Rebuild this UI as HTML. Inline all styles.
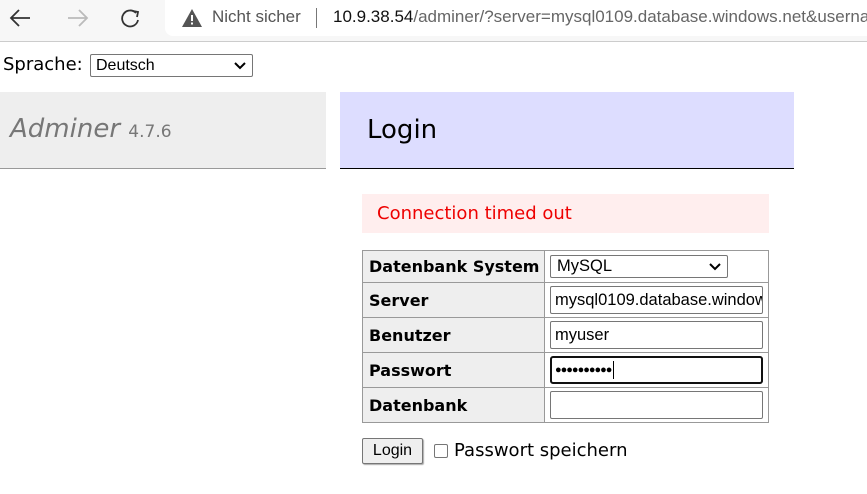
<!DOCTYPE html>
<html><head><style>
*{margin:0;padding:0;box-sizing:border-box}
body{width:867px;height:494px;overflow:hidden;background:#fff;font-family:"DejaVu Sans",sans-serif;position:relative}
.a{position:absolute}
.lbl{position:absolute;left:369px;font-weight:bold;font-size:16px;color:#000}
.inp{position:absolute;left:550px;width:213px;height:28px;border:1px solid #767676;border-radius:2px;background:#fff;font-family:"Liberation Sans",sans-serif;font-size:16.5px;padding-left:4px;line-height:26px;overflow:hidden;white-space:nowrap}
</style></head><body>
<div class="a" style="left:0;top:0;width:867px;height:42px;background:#f7f7f7;border-bottom:1px solid #ccc"></div>
<svg class="a" style="left:6px;top:6px" width="140" height="26" viewBox="0 0 140 26">
<path d="M24 12H6M13 4L5 12L13 20" stroke="#333" stroke-width="1.8" fill="none"/>
<path d="M62 12H80M73 4L81 12L73 20" stroke="#bbb" stroke-width="1.8" fill="none"/>
<path d="M130 7A8 8 0 1 0 132 14" stroke="#333" stroke-width="1.8" fill="none"/><path d="M127 5L132 6L131 11" stroke="#333" stroke-width="1.8" fill="none"/>
</svg>
<div class="a" style="left:165px;top:0;width:710px;height:36px;background:#fff;border-radius:0 0 0 8px"></div>
<svg class="a" style="left:181px;top:8px" width="22" height="20"><path d="M11 1L21 19H1Z" fill="#555"/><rect x="10" y="7" width="2" height="6" fill="#fff"/><rect x="10" y="14.5" width="2" height="2" fill="#fff"/></svg>
<div class="a" style="left:212px;top:7px;font-family:'Liberation Sans',sans-serif;font-size:17px;color:#555;white-space:nowrap">Nicht sicher</div>
<div class="a" style="left:316px;top:8px;width:1px;height:20px;background:#777"></div>
<div class="a" style="left:333px;top:7px;font-family:'Liberation Sans',sans-serif;font-size:17px;color:#111;white-space:nowrap">10.9.38.54<span style="color:#666">/adminer/?server=mysql0109.database.windows.net&amp;username</span></div>

<div class="a" style="left:3px;top:54px;font-size:18px">Sprache:</div>
<div class="a" style="left:90px;top:54px;width:163px;height:23px;border:1px solid #767676;border-radius:2px;font-family:'Liberation Sans',sans-serif;font-size:16px;padding-left:5px;line-height:21px">Deutsch<svg class="a" style="right:6px;top:7px" width="12" height="8"><path d="M1 1L6 6L11 1" stroke="#000" stroke-width="2" fill="none"/></svg></div>

<div class="a" style="left:0;top:92px;width:326px;height:77px;background:#eee;border-bottom:1px solid #999"></div>
<div class="a" style="left:10px;top:114px;font-size:26px;font-style:italic;color:#777;white-space:nowrap">Adminer <span style="font-style:normal;font-size:17px">4.7.6</span></div>
<div class="a" style="left:340px;top:92px;width:454px;height:77px;background:#ddf;border-bottom:1px solid #000"></div>
<div class="a" style="left:367px;top:115px;font-size:26px">Login</div>

<div class="a" style="left:362px;top:194px;width:407px;height:39px;background:#fee;color:#e00;font-size:18px;padding:9px 0 0 15px">Connection timed out</div>

<div class="a" style="left:362px;top:250px;width:407px;height:173px;border:1px solid #999"></div>
<div class="a" style="left:363px;top:251px;width:182px;height:171px;background:#eee;border-right:1px solid #999"></div>
<div class="a" style="left:362px;top:282px;width:407px;height:1px;background:#999"></div>
<div class="a" style="left:362px;top:317px;width:407px;height:1px;background:#999"></div>
<div class="a" style="left:362px;top:352px;width:407px;height:1px;background:#999"></div>
<div class="a" style="left:362px;top:387px;width:407px;height:1px;background:#999"></div>
<div class="lbl" style="top:257px">Datenbank System</div>
<div class="lbl" style="top:291px">Server</div>
<div class="lbl" style="top:326px">Benutzer</div>
<div class="lbl" style="top:361px">Passwort</div>
<div class="lbl" style="top:396px">Datenbank</div>
<div class="inp" style="top:255px;width:178px;height:23px;line-height:21px;padding-left:6px">MySQL<svg class="a" style="right:6px;top:7px" width="12" height="8"><path d="M1 1L6 6L11 1" stroke="#000" stroke-width="2" fill="none"/></svg></div>
<div class="inp" style="top:286px">mysql0109.database.windows.net</div>
<div class="inp" style="top:321px">myuser</div>
<div class="inp" style="top:356px;border:2px solid #111;border-radius:3px;font-size:11px;letter-spacing:-1px;line-height:24px;padding-left:3px">●●●●●●●●●●<span style="display:inline-block;width:1px;height:18px;background:#000;vertical-align:middle;margin-left:2px"></span></div>
<div class="inp" style="top:391px"></div>

<div class="a" style="left:362px;top:438px;width:61px;height:26px;border:1px solid #767676;border-radius:2px;background:#efefef;font-family:'Liberation Sans',sans-serif;font-size:16px;text-align:center;line-height:24px;box-shadow:1px 1px 1px #aaa">Login</div>
<div class="a" style="left:434px;top:444px;width:14px;height:14px;border:1px solid #767676;border-radius:2px"></div>
<div class="a" style="left:454px;top:440px;font-size:18px">Passwort speichern</div>
</body></html>
